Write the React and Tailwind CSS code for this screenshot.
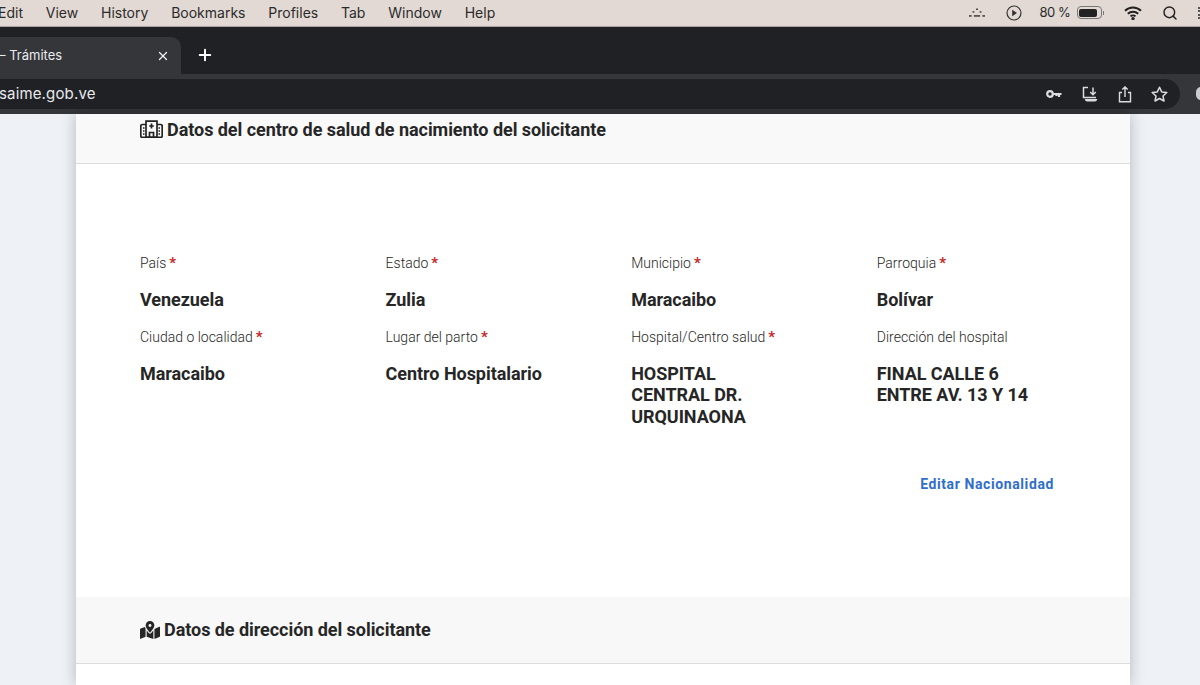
import React from 'react'
import { FaMapMarkedAlt } from 'react-icons/fa'
import { X, Plus, Search } from 'lucide-react'

const menus = ['Edit', 'View', 'History', 'Bookmarks', 'Profiles', 'Tab', 'Window', 'Help']

const HospitalIcon = () => (
  <svg width="23" height="18" viewBox="0 0 23 18" fill="none" stroke="#222" strokeWidth="1.7" className="shrink-0">
    <path d="M6 1.2h11v16H6z" />
    <path d="M6 4.5H2.2a1.4 1.4 0 0 0-1.4 1.4v10a1.4 1.4 0 0 0 1.4 1.4H6M17 4.5h3.8a1.4 1.4 0 0 1 1.4 1.4v10a1.4 1.4 0 0 1-1.4 1.4H17" />
    <path d="M9.5 17v-4.5h4V17M11.5 3.5v5M9.2 6h4.6" />
    <path d="M3 8h1.5M3 11h1.5M3 14h1.5M18.5 8H20M18.5 11H20M18.5 14H20" />
  </svg>
)

const Req = () => <span className="text-[#c62828] font-bold ml-[3px] text-[15px]">*</span>

const Field = ({ label, req, value }) => (
  <div className="w-[245.6px] shrink-0">
    <div className="h-[20px] text-[14px] leading-[20px] font-light text-[#1f1f1f]">
      {label}
      {req && <Req />}
    </div>
    <div className="mt-[16px] text-[18px] leading-[21.4px] font-bold tracking-[-0.05px] text-[#262626] w-[160px]">
      {value}
    </div>
  </div>
)

const MenuBar = () => (
  <div className="h-[27px] pb-[1px] bg-[#e3d9d4] border-b border-[#a9a29e] flex items-center justify-between text-[#2b2b2b] text-[14px] font-['Inter',sans-serif]">
    <div className="flex gap-[22.8px] ml-[-2px]">
      {menus.map((m) => (
        <span key={m}>{m}</span>
      ))}
    </div>
    <div className="flex items-center">
      <svg width="16" height="10" viewBox="0 0 18 10" fill="#333">
        <rect x="8" y="0" width="2" height="1.6" />
        <rect x="4" y="3" width="2" height="1.6" />
        <rect x="12" y="3" width="2" height="1.6" />
        <rect x="0" y="7.5" width="3" height="1.6" />
        <rect x="5.5" y="7.5" width="7" height="1.6" />
        <rect x="15" y="7.5" width="3" height="1.6" />
      </svg>
      <svg width="16" height="16" viewBox="0 0 16 16" fill="none" stroke="#333" strokeWidth="1.2" className="ml-[21px]">
        <circle cx="8" cy="8" r="7" />
        <path d="M6.2 4.8 11 8l-4.8 3.2z" fill="#333" stroke="none" />
      </svg>
      <span className="ml-[17px] text-[13px] tracking-[-0.4px]">80 %</span>
      <div className="ml-[6px] flex items-center">
        <div className="w-[25px] h-[13px] rounded-[4px] border border-[#777] p-[1.5px]">
          <div className="w-[18px] h-full rounded-[2px] bg-[#222]"></div>
        </div>
        <div className="w-[1.5px] h-[4px] bg-[#777] ml-[1px]"></div>
      </div>
      <svg width="18" height="14" viewBox="0 0 18 14" fill="none" stroke="#222" strokeWidth="2" className="ml-[20px]">
        <path d="M1 4.8a11.5 11.5 0 0 1 16 0M3.8 7.8a7.5 7.5 0 0 1 10.4 0M6.5 10.4a3.6 3.6 0 0 1 5 0" />
        <circle cx="9" cy="12.6" r="0.7" fill="#222" />
      </svg>
      <Search size={16} strokeWidth={2.2} color="#222" className="ml-[20px]" />
      <div className="ml-[20px] w-[2px] h-[12px] border-l-2 border-dotted border-[#555]"></div>
    </div>
  </div>
)

const TabBar = () => (
  <div className="h-[47px] bg-[#202124] pt-[10px] flex items-start">
    <div className="w-[181px] h-[37px] bg-[#35363a] rounded-tr-[10px] flex items-center justify-between pr-[11px] text-[13px] text-[#e8eaed] font-['Inter',sans-serif]">
      <span className="ml-[-1px]">– Trámites</span>
      <X size={14} strokeWidth={2.2} color="#f2f2f2" />
    </div>
    <Plus size={18} strokeWidth={2.6} color="#fff" className="ml-[15px] mt-[9px]" />
  </div>
)

const ToolBar = () => (
  <div className="h-[40px] bg-[#35363a] pt-[5px] flex items-start overflow-hidden">
    <div className="w-[1180px] shrink-0 h-[30px] bg-[#202124] rounded-r-[15px] flex items-center justify-between pr-[12px]">
      <span className="text-[15px] text-[#e8eaed] font-['Inter',sans-serif] tracking-[0.15px] ml-[-1px] mt-[1px]">saime.gob.ve</span>
      <div className="flex items-center gap-[19px] text-[#dadce0]">
        <svg width="16" height="10" viewBox="0 0 16 10" fill="none" stroke="#dadce0" strokeWidth="2.2" className="mr-[1px]">
          <circle cx="4" cy="5" r="2.8" />
          <path d="M7 5h8.5M13 5v3M10.5 5v2" />
        </svg>
        <svg width="17" height="17" viewBox="0 0 17 17" fill="none" stroke="#dadce0" strokeWidth="1.5">
          <path d="M6 1.5H1.5V11.5H14M11 1.5v7M8.2 6l2.8 2.8L13.8 6" />
          <path d="M2.8 13h12.4c0 1.6-1 2.5-2.5 2.5H5.3c-1.5 0-2.5-.9-2.5-2.5z" fill="#dadce0" stroke="none" />
        </svg>
        <svg width="14" height="17" viewBox="0 0 14 17" fill="none" stroke="#dadce0" strokeWidth="1.4">
          <path d="M4 6.5H1.5v9.3h11V6.5H10M7 11V1M4.3 3.5 7 .9l2.7 2.6" />
        </svg>
        <svg width="17" height="16" viewBox="0 0 17 16" fill="none" stroke="#dadce0" strokeWidth="1.5" strokeLinejoin="round">
          <path d="m8.5 1.2 2.2 4.7 5.1.6-3.8 3.5 1 5-4.5-2.5L4 15l1-5-3.8-3.5 5.1-.6z" />
        </svg>
      </div>
    </div>
    <div className="ml-[16px] mt-[8px] w-[10px] h-[13px] shrink-0 rounded-full bg-[#c9cdd2]"></div>
  </div>
)

const App = () => {
  return (
    <div className="w-[1200px] h-[685px] overflow-hidden bg-[#eef2f7] font-['Roboto',sans-serif]">
      <MenuBar />
      <TabBar />
      <ToolBar />
      <div className="ml-[76px] w-[1054px] h-[571px] bg-white shadow-[0_0_14px_rgba(0,0,0,0.25)]">
        <div className="h-[50px] bg-[#f9f9f9] border-b border-[#dcdcdc] pl-[64px] pt-[3px] flex items-start gap-[4px]">
          <div className="mt-[3px]"><HospitalIcon /></div>
          <h2 className="text-[18px] leading-[26px] font-bold tracking-[-0.05px] text-[#262626]">Datos del centro de salud de nacimiento del solicitante</h2>
        </div>
        <div className="h-[433px] pl-[64px] pt-[89px]">
          <div className="flex">
            <Field label="País" req value="Venezuela" />
            <Field label="Estado" req value="Zulia" />
            <Field label="Municipio" req value="Maracaibo" />
            <Field label="Parroquia" req value="Bolívar" />
          </div>
          <div className="flex mt-[16.6px]">
            <Field label="Ciudad o localidad" req value="Maracaibo" />
            <Field label="Lugar del parto" req value="Centro Hospitalario" />
            <Field label="Hospital/Centro salud" req value="HOSPITAL CENTRAL DR. URQUINAONA" />
            <Field label="Dirección del hospital" value="FINAL CALLE 6 ENTRE AV. 13 Y 14" />
          </div>
          <div className="flex justify-end pr-[76px] mt-[46.4px]">
            <a href="#" className="text-[14px] leading-[20px] font-bold tracking-[0.6px] text-[#2f6fc9]">Editar Nacionalidad</a>
          </div>
        </div>
        <div className="h-[67px] bg-[#f8f8f8] border-b border-[#dcdcdc] pl-[64px] pt-[20px] flex items-start gap-[4px]">
          <FaMapMarkedAlt size={20} color="#262626" className="mt-[3px]" />
          <h2 className="text-[18px] leading-[26px] font-bold tracking-[-0.05px] text-[#262626]">Datos de dirección del solicitante</h2>
        </div>
      </div>
    </div>
  )
}

export default App
